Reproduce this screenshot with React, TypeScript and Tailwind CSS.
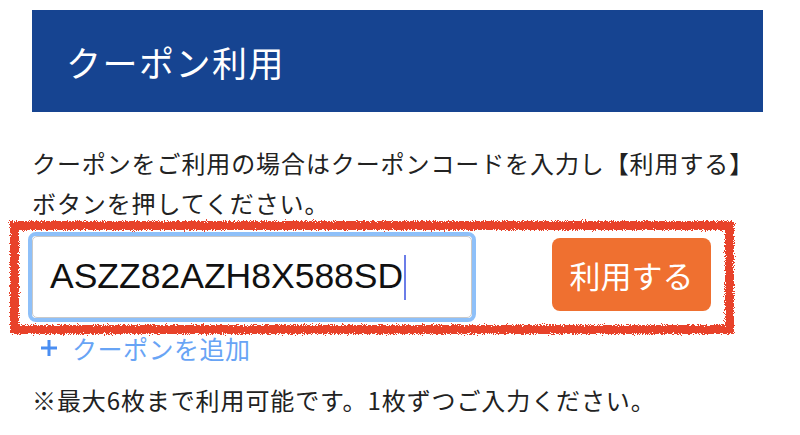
import React from "react";

export default function App() {
  const jp = { fontFamily: '"Noto Sans CJK JP", "Noto Sans", sans-serif' };
  return (
    <div className="relative w-[800px] h-[435px] bg-white overflow-hidden" style={jp}>
      <div className="pt-[10px] pl-[32px]">
        <div className="w-[731px] h-[102px] bg-[#164491] flex items-center pl-[34px]">
          <span className="text-white text-[35px] leading-none tracking-[1.5px]">クーポン利用</span>
        </div>
        <p className="mt-[31px] text-[24px] leading-[40px] text-[#222] tracking-[0.9px]">
          クーポンをご利用の場合はクーポンコードを入力し【利用する】
          <br />
          ボタンを押してください。
        </p>
        <div className="mt-[9px] -ml-[4px] flex items-center">
          <div className="w-[448px] h-[90px] rounded-[8px] border-[4px] border-[#8ec0f9] bg-white">
            <div className="h-full rounded-[5px] border border-[#c9c9c9] flex items-center pl-[17px]">
              <span
                className="text-[35.5px] text-[#111] leading-none"
                style={{ fontFamily: '"Liberation Sans", Arial, sans-serif' }}
              >
                ASZZ82AZH8X588SD
              </span>
              <span className="ml-[1px] w-[2px] h-[45px] bg-[#6b7de8]" />
            </div>
          </div>
          <button className="ml-[76px] mt-[-5px] w-[159px] h-[73px] rounded-[8px] bg-[#ef7030] text-white text-[31px] leading-none flex items-center justify-center">
            利用する
          </button>
        </div>
        <div className="mt-[6px] ml-[8px] flex items-center h-[40px] text-[#68a4f5]">
          <svg width="18" height="18" viewBox="0 0 18 18" className="mr-[14px]">
            <path d="M9 1v16M1 9h16" stroke="#4a8ef2" strokeWidth="3" fill="none" />
          </svg>
          <span className="text-[25px] leading-none tracking-[0.5px]">クーポンを追加</span>
        </div>
        <p className="mt-[12px] text-[24px] leading-[40px] text-[#222] tracking-[0.9px]">
          ※最大6枚まで利用可能です。1枚ずつご入力ください。
        </p>
      </div>
      <svg className="absolute left-0 top-0 pointer-events-none" width="800" height="435">
        <defs>
          <filter id="rough" x="-5%" y="-20%" width="110%" height="140%">
            <feTurbulence type="fractalNoise" baseFrequency="0.9" numOctaves="3" seed="3" result="n" />
            <feDisplacementMap in="SourceGraphic" in2="n" scale="6" />
          </filter>
        </defs>
        <rect
          x="14.5"
          y="225.5"
          width="715"
          height="104"
          fill="none"
          stroke="#e8432a"
          strokeWidth="9"
          filter="url(#rough)"
        />
      </svg>
    </div>
  );
}
